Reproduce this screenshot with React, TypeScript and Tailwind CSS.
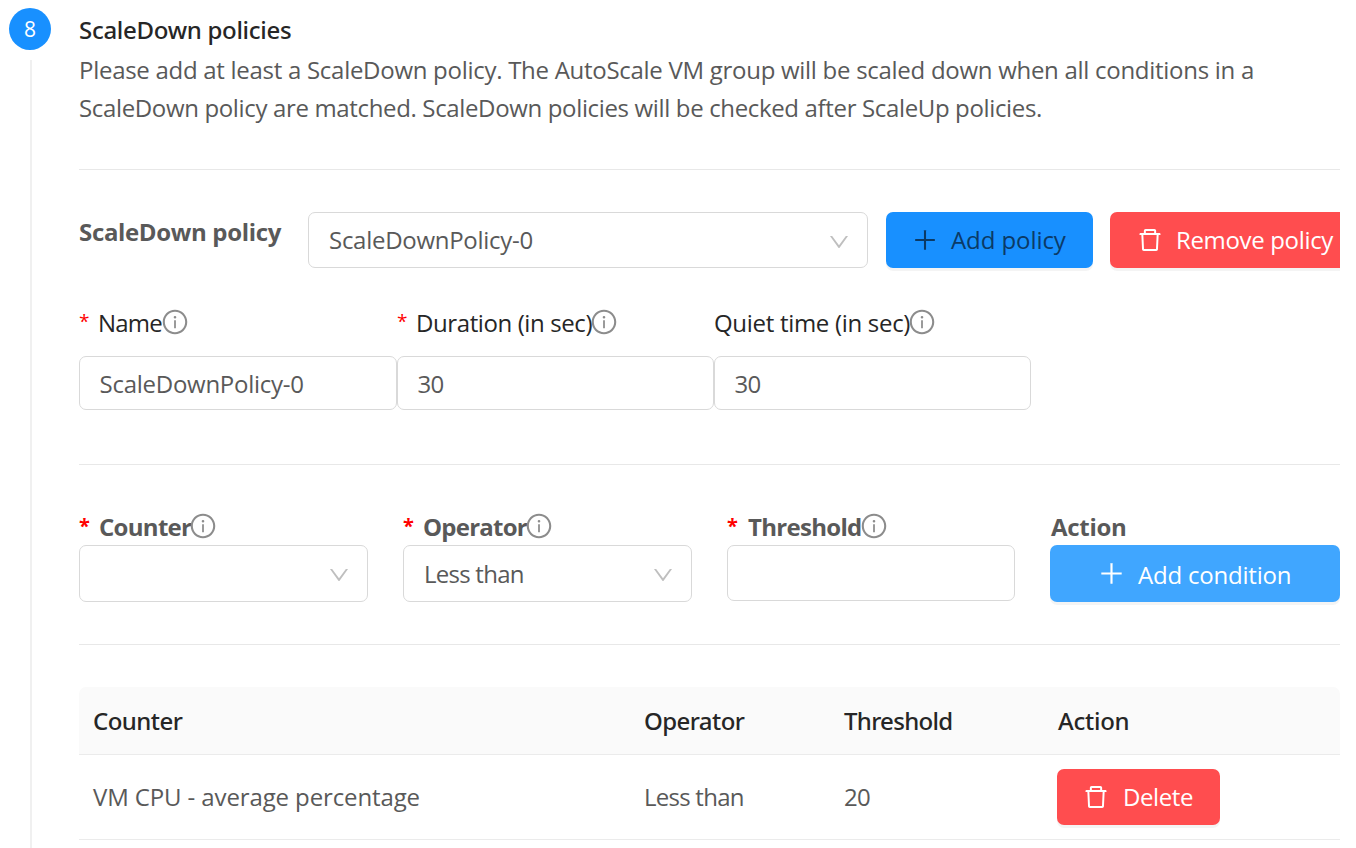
import type { ReactNode } from "react";
import {
  AiOutlineDelete,
  AiOutlineDown,
  AiOutlineInfoCircle,
  AiOutlinePlus,
} from "react-icons/ai";

function Divider() {
  return <div className="h-px w-full shrink-0 bg-[#e8e8e8]" />;
}

function FieldLabel({
  children,
  required = false,
  bold = false,
  text,
}: {
  children?: ReactNode;
  required?: boolean;
  bold?: boolean;
  text: string;
}) {
  return (
    <div
      className={
        bold
          ? "flex h-[38px] items-center pt-0.5 font-bold text-[#595959]"
          : "flex h-[38px] items-center text-[#262626]"
      }
    >
      {required && (
        <span
          className={
            bold
              ? "w-5 shrink-0 pb-[3px] text-[20px] leading-none text-[#ff0000]"
              : "w-[19px] shrink-0 pb-[3px] text-[19px] leading-none text-[#ff0000]"
          }
        >
          *
        </span>
      )}
      <span className={text}>{children}</span>
    </div>
  );
}

function Info({ className = "-mt-[2px] -ml-[2px]" }: { className?: string }) {
  return <AiOutlineInfoCircle className={`size-7 shrink-0 text-[#8c8c8c] ${className}`} />;
}

function LabelRow({ children }: { children: ReactNode }) {
  return <div className="flex items-center">{children}</div>;
}

function Select({ value, text, className }: { value: string; text: string; className: string }) {
  return (
    <div
      className={`flex items-center justify-between rounded-[7px] border border-[#d9d9d9] bg-white pr-[16.5px] pl-5 ${className}`}
    >
      <span className={text}>{value}</span>
      <AiOutlineDown className="mt-[3px] size-6 text-[#bfbfbf]" />
    </div>
  );
}

function Input({ value, text = "" }: { value: string; text?: string }) {
  return (
    <div className="flex h-[54px] items-center rounded-[7px] border border-[#d9d9d9] bg-white pt-0.5 pl-[19.5px]">
      <span className={text}>{value}</span>
    </div>
  );
}

const buttonBase =
  "flex shrink-0 items-center rounded-[7px] shadow-[0_3px_0_rgba(0,0,0,0.045)] whitespace-nowrap";

export default function App() {
  return (
    <div className="flex h-[848px] w-[1356px] overflow-hidden bg-white pl-[9px] font-['Open_Sans','Noto_Sans',sans-serif] text-[24px] leading-[38px] text-[#595959]">
      <div className="flex w-[70px] shrink-0 flex-col pt-2">
        <div className="flex size-[42px] items-center justify-center rounded-full bg-[#1890ff] pt-px text-[21px] leading-none text-white">
          8
        </div>
        <div className="mt-[10px] ml-[21px] w-[2px] flex-1 bg-[#f0f0f0]" />
      </div>

      <main className="flex h-full w-[1261px] shrink-0 flex-col overflow-hidden">
        <h2 className="mt-[11px] font-['Noto_Sans',sans-serif] font-medium tracking-[-0.29px] text-[#262626]">
          ScaleDown policies
        </h2>
        <p className="mt-[2px] whitespace-nowrap">
          <span className="block tracking-[-0.282px]">
            Please add at least a ScaleDown policy. The AutoScale VM group will be scaled down when all conditions in a
          </span>
          <span className="block tracking-[-0.349px]">
            ScaleDown policy are matched. ScaleDown policies will be checked after ScaleUp policies.
          </span>
        </p>
        <div className="h-[42px] shrink-0" />
        <Divider />

        <section className="mt-[42px] flex h-14 shrink-0">
          <span className="w-[229px] shrink-0 pt-px font-bold tracking-[-0.34px]">ScaleDown policy</span>
          <Select value="ScaleDownPolicy-0" text="pb-px tracking-[-0.28px]" className="h-14 w-[560px] shrink-0" />
          <button className={`${buttonBase} ml-[18px] h-14 w-[207px] bg-[#1890ff] pl-[25px] text-[#0b3a66]`}>
            <AiOutlinePlus className="size-7" />
            <span className="ml-3 tracking-[-0.08px]">Add policy</span>
          </button>
          <button className={`${buttonBase} ml-[17px] h-14 w-[250px] bg-[#ff4d4f] pl-[26px] text-white`}>
            <AiOutlineDelete className="size-7" />
            <span className="ml-3 tracking-[-0.339px]">Remove policy</span>
          </button>
        </section>

        <section className="mt-9 grid w-[952px] grid-cols-[318px_317px_317px]">
          <div className="flex flex-col gap-[14px]">
            <LabelRow>
              <FieldLabel required text="tracking-[-0.777px]">Name</FieldLabel>
              <Info className="-mt-[2px] -ml-px" />
            </LabelRow>
            <Input value="ScaleDownPolicy-0" text="tracking-[-0.26px]" />
          </div>
          <div className="flex flex-col gap-[14px]">
            <LabelRow>
              <FieldLabel required text="tracking-[-0.4px]">Duration (in sec)</FieldLabel>
              <Info />
            </LabelRow>
            <Input value="30" text="tracking-[-0.6px]" />
          </div>
          <div className="flex flex-col gap-[14px]">
            <LabelRow>
              <FieldLabel text="tracking-[-0.3px]">Quiet time (in sec)</FieldLabel>
              <Info />
            </LabelRow>
            <Input value="30" text="tracking-[-0.6px]" />
          </div>
        </section>
        <div className="h-[54px] shrink-0" />
        <Divider />

        <section className="mt-[42px] grid shrink-0 grid-cols-[289px_289px_288px_290px] gap-x-[35px]">
          <div>
            <LabelRow>
              <FieldLabel required bold text="tracking-[-0.7px]">Counter</FieldLabel>
              <Info className="-mt-px -ml-[2px]" />
            </LabelRow>
            <Select value="" text="" className="h-[57px]" />
          </div>
          <div>
            <LabelRow>
              <FieldLabel required bold text="tracking-[-0.756px]">Operator</FieldLabel>
              <Info className="-mt-px -ml-[2px]" />
            </LabelRow>
            <Select value="Less than" text="pt-px tracking-[-0.75px]" className="h-[57px]" />
          </div>
          <div>
            <LabelRow>
              <FieldLabel required bold text="pl-px tracking-[-0.69px]">Threshold</FieldLabel>
              <Info className="-mt-px -ml-[2px]" />
            </LabelRow>
            <div className="h-14 rounded-[7px] border border-[#d9d9d9]" />
          </div>
          <div>
            <FieldLabel bold text="pl-px tracking-[-0.3px]">Action</FieldLabel>
            <button className={`${buttonBase} h-[57px] w-full bg-[#40a6ff] pl-[47px] text-white`}>
              <AiOutlinePlus className="size-[29px]" />
              <span className="ml-3 pt-0.5 tracking-[-0.2px]">Add condition</span>
            </button>
          </div>
        </section>
        <div className="h-[42px] shrink-0" />
        <Divider />

        <section className="mt-[42px] shrink-0">
          <div className="grid h-[68px] grid-cols-[551px_200px_214px_1fr] items-center rounded-t-[7px] border-b border-[#ebebeb] bg-[#fafafa] pl-[14px] font-['Noto_Sans',sans-serif] font-medium text-[#262626]">
            <span className="tracking-[-0.55px]">Counter</span>
            <span className="tracking-[-0.57px]">Operator</span>
            <span className="tracking-[-0.7px]">Threshold</span>
            <span className="tracking-[-0.25px]">Action</span>
          </div>
          <div className="grid h-[85px] grid-cols-[551px_200px_213px_1fr] items-center border-b border-[#ebebeb] pl-[14px]">
            <span className="tracking-[-0.116px]">VM CPU - average percentage</span>
            <span className="tracking-[-0.75px]">Less than</span>
            <span className="tracking-[-0.6px]">20</span>
            <button className={`${buttonBase} h-14 w-[163px] bg-[#ff4d4f] pl-[25px] text-white`}>
              <AiOutlineDelete className="size-7" />
              <span className="ml-[13px] tracking-[-0.411px]">Delete</span>
            </button>
          </div>
        </section>
      </main>
    </div>
  );
}
